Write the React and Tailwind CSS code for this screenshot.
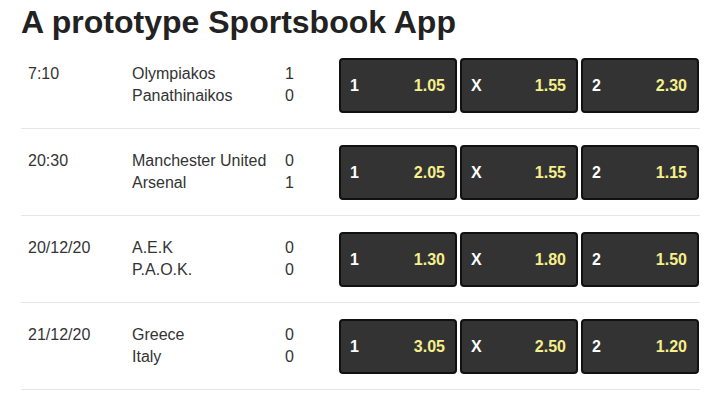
const matches = [
  { time: '7:10', home: 'Olympiakos', away: 'Panathinaikos', hs: 1, as: 0, odds: ['1.05', '1.55', '2.30'] },
  { time: '20:30', home: 'Manchester United', away: 'Arsenal', hs: 0, as: 1, odds: ['2.05', '1.55', '1.15'] },
  { time: '20/12/20', home: 'A.E.K', away: 'P.A.O.K.', hs: 0, as: 0, odds: ['1.30', '1.80', '1.50'] },
  { time: '21/12/20', home: 'Greece', away: 'Italy', hs: 0, as: 0, odds: ['3.05', '2.50', '1.20'] },
];

const labels = ['1', 'X', '2'];

function OddButton({ label, value }) {
  return (
    <button className="flex h-[55px] w-[118px] items-center justify-between rounded-[4px] border-2 border-[#111] bg-[#333] pl-[9px] pr-[10px] text-[16px] font-bold">
      <span className="text-white">{label}</span>
      <span className="text-[#f6ef8c]">{value}</span>
    </button>
  );
}

export default function App() {
  return (
    <div className="min-h-[406px] bg-white px-[21px] font-['Liberation_Sans',Arial,sans-serif] text-[#333]">
      <h1 className="mb-[4px] pt-[6px] text-[32px] font-bold leading-[32px] text-[#222]">
        A prototype Sportsbook App
      </h1>
      <div className="w-[679px]">
        {matches.map((m, i) => (
          <div key={i} className="flex h-[87px] items-start border-b border-[#e6e6e6]">
            <div className="w-[111px] pl-[7px] pt-[21px] text-[16px] leading-[22px]">{m.time}</div>
            <div className="w-[153px] pt-[21px] text-[16px] leading-[22px]">
              <div>{m.home}</div>
              <div>{m.away}</div>
            </div>
            <div className="w-[54px] pt-[21px] text-[16px] leading-[22px]">
              <div>{m.hs}</div>
              <div>{m.as}</div>
            </div>
            <div className="flex gap-[3px] pt-[16px]">
              {m.odds.map((o, j) => (
                <OddButton key={j} label={labels[j]} value={o} />
              ))}
            </div>
          </div>
        ))}
      </div>
    </div>
  );
}
